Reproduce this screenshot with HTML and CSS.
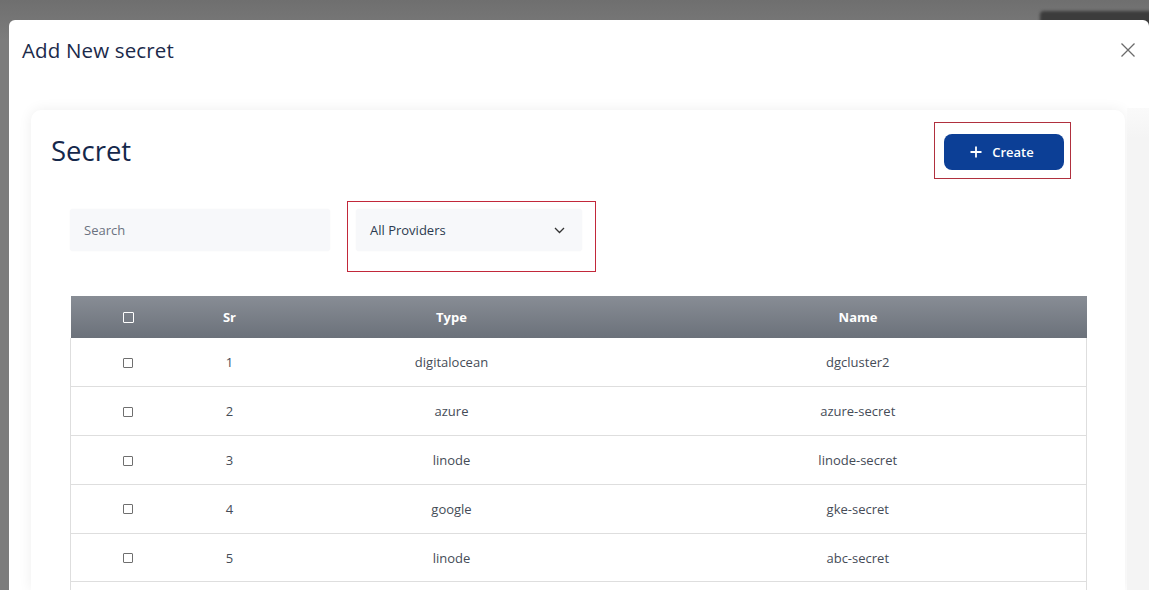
FILE: index.html
```html
<!DOCTYPE html>
<html lang="en">
<head>
<meta charset="utf-8">
<title>Add New secret</title>
<link rel="stylesheet" href="styles.css">
</head>
<body>
<div class="backdrop">
  <div class="underlay-btn"></div>
  <div class="modal">
    <div class="modal-header">
      <h2 class="modal-title">Add New secret</h2>
      <button class="close-btn" aria-label="Close">
        <svg width="16" height="16" viewBox="0 0 16 16"><path d="M1.5 1.5 L14.5 14.5 M14.5 1.5 L1.5 14.5" stroke="#6b6b6b" stroke-width="1.3" fill="none"/></svg>
      </button>
    </div>
    <div class="modal-body">
      <div class="content">
        <div class="card">
          <div class="card-head">
            <h1 class="card-title">Secret</h1>
            <div class="mark-create">
              <button class="create-btn">
                <svg width="12" height="12" viewBox="0 0 12 12"><path d="M6 0.5 V11.5 M0.5 6 H11.5" stroke="#fff" stroke-width="1.8" fill="none"/></svg>
                <span>Create</span>
              </button>
            </div>
          </div>
          <div class="card-inner">
            <div class="filters">
              <div class="search">Search</div>
              <div class="mark-select">
                <div class="select">
                  <span>All Providers</span>
                  <svg width="11" height="7" viewBox="0 0 11 7"><path d="M1 1 L5.5 5.5 L10 1" stroke="#333" stroke-width="1.3" fill="none"/></svg>
                </div>
              </div>
            </div>
            <table class="grid">
              <colgroup>
                <col class="c-check"><col class="c-sr"><col class="c-type"><col class="c-name">
              </colgroup>
              <thead>
                <tr><th><span class="cb cb-head"></span></th><th>Sr</th><th>Type</th><th>Name</th></tr>
              </thead>
              <tbody>
                <tr><td><span class="cb"></span></td><td>1</td><td>digitalocean</td><td>dgcluster2</td></tr>
                <tr><td><span class="cb"></span></td><td>2</td><td>azure</td><td>azure-secret</td></tr>
                <tr><td><span class="cb"></span></td><td>3</td><td>linode</td><td>linode-secret</td></tr>
                <tr><td><span class="cb"></span></td><td>4</td><td>google</td><td>gke-secret</td></tr>
                <tr><td><span class="cb"></span></td><td>5</td><td>linode</td><td>abc-secret</td></tr>
                <tr><td><span class="cb"></span></td><td></td><td></td><td></td></tr>
              </tbody>
            </table>
          </div>
        </div>
      </div>
      <div class="track"></div>
    </div>
  </div>
</div>
</body>
</html>
```

FILE: styles.css
```css
* { box-sizing: border-box; }
html, body { margin: 0; padding: 0; }
body {
  width: 1149px;
  height: 590px;
  overflow: hidden;
  background: #7a7a7a;
  font-family: "Open Sans", "Noto Sans", sans-serif;
}
.backdrop {
  position: relative;
  height: 590px;
  overflow: hidden;
  padding: 20px 0 0 9px;
  background: linear-gradient(#6f6f6f, #7c7c7c 40px, #7c7c7c);
}
.underlay-btn {
  position: absolute;
  left: 1040px;
  top: 11px;
  width: 120px;
  height: 20px;
  border-radius: 4px;
  background: #3c3c3c;
  filter: blur(1.5px);
}
.modal {
  position: relative;
  height: 570px;
  overflow: hidden;
  background: #fff;
  border-radius: 6px 6px 0 0;
  display: flex;
  flex-direction: column;
}
.modal-header {
  height: 60px;
  flex: none;
  padding: 0 13px 0 13px;
  display: flex;
  align-items: center;
  justify-content: space-between;
}
.modal-title {
  margin: 0;
  font-size: 20.5px;
  font-weight: 400;
  color: #1b2a4a;
  letter-spacing: 0.15px;
}
.close-btn {
  border: 0;
  background: none;
  padding: 0;
  width: 16px;
  height: 16px;
  display: flex;
}
.modal-body {
  flex: 1;
  display: flex;
  min-height: 0;
}
.content {
  flex: 1;
  padding: 30px 2px 0 22px;
  min-width: 0;
}
.track {
  width: 22px;
  margin-top: 28px;
  background: linear-gradient(#fafafa, #f4f4f4 30px);
}
.card {
  background: #fff;
  border-radius: 10px 10px 0 0;
  box-shadow: 0 0 14px rgba(0, 0, 0, 0.07);
  height: 100%;
}
.card-head {
  display: flex;
  align-items: center;
  justify-content: space-between;
  padding: 12px 54px 0 20px;
}
.card-title {
  margin: 0;
  font-size: 27.5px;
  font-weight: 500;
  color: #15284b;
}
.mark-create {
  width: 137px;
  height: 57px;
  padding: 11px 0 0 9px;
  border: 1px solid #b0303e;
}
.create-btn {
  width: 120px;
  height: 36px;
  border: 0;
  border-radius: 8px;
  background: #0c3f96;
  color: #fff;
  font-family: inherit;
  font-size: 13px;
  font-weight: 600;
  display: flex;
  align-items: center;
  justify-content: center;
  gap: 10px;
  padding: 0 4px 0 0;
}
.card-inner {
  padding: 22px 39px 0 39px;
}
.filters {
  display: flex;
  align-items: flex-start;
  gap: 17px;
}
.search {
  width: 260px;
  height: 42px;
  margin-top: 8px;
  background: #f7f8fa;
  border-radius: 3px;
  box-shadow: 0 0 2px rgba(0, 0, 0, 0.04);
  font-size: 13px;
  color: #6b7280;
  padding-left: 14px;
  display: flex;
  align-items: center;
}
.mark-select {
  width: 249px;
  height: 71px;
  padding: 8px 0 0 9px;
  box-shadow: inset 0 0 0 1px #c2283a;
}
.select {
  width: 226px;
  height: 42px;
  background: #f7f8fa;
  border-radius: 3px;
  box-shadow: 0 0 2px rgba(0, 0, 0, 0.04);
  display: flex;
  align-items: center;
  justify-content: space-between;
  padding: 0 17px 0 14px;
  font-size: 13px;
  font-weight: 500;
  color: #2c3a4f;
}
.grid {
  margin-top: 24px;
  width: 1016px;
  border-collapse: collapse;
  table-layout: fixed;
  font-size: 13px;
}
.c-check { width: 115px; }
.c-sr { width: 88px; }
.c-type { width: 356px; }
.c-name { width: 457px; }
.grid th {
  height: 42px;
  background: linear-gradient(#888d95, #6b717a);
  color: #fff;
  font-weight: 700;
  text-align: center;
  padding: 0;
}
.grid td {
  height: 48.8px;
  text-align: center;
  color: #454c57;
  border-bottom: 1px solid #dedede;
  padding: 0;
}
.grid tbody tr td:first-child { border-left: 1px solid #dedede; }
.grid tbody tr td:last-child { border-right: 1px solid #dedede; }
.cb {
  display: inline-block;
  width: 10px;
  height: 10px;
  border: 1px solid #6f6f6f;
  border-radius: 1px;
  vertical-align: middle;
  position: relative;
  top: -1px;
}
.cb.cb-head {
  border: 1.5px solid #fff;
  width: 11px;
  height: 11px;
}
```
